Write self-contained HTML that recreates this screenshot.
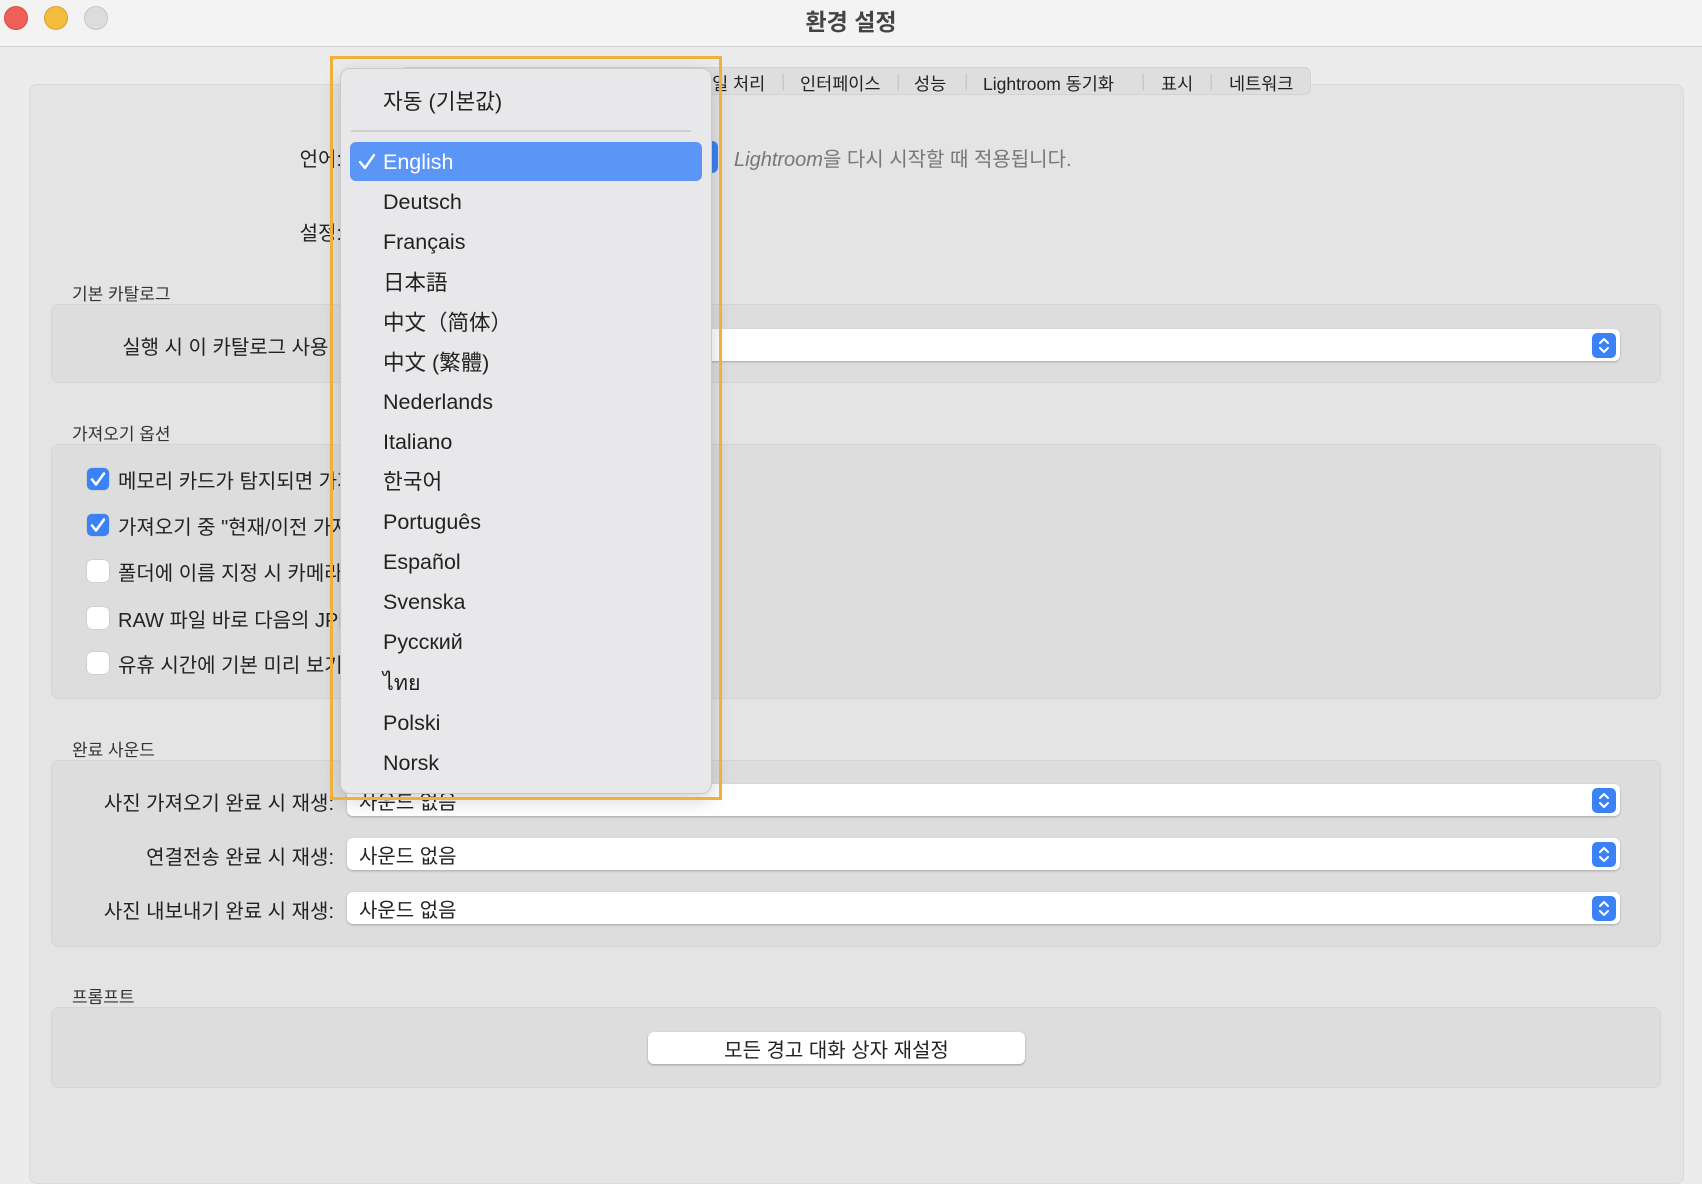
<!DOCTYPE html>
<html><head><meta charset="utf-8"><style>
*{margin:0;padding:0;box-sizing:border-box}
body{width:1702px;height:1128px;background:#ececec;font-family:"Liberation Sans","Noto Sans CJK KR",sans-serif;color:#222;position:relative;overflow:hidden}
.a{position:absolute}
.titlebar{left:0;top:0;width:1702px;height:47px;background:#f3f3f3;border-bottom:1px solid #d0d0d0}
.dot{width:24px;height:24px;border-radius:50%;top:6px}
.panel{left:29px;top:84px;width:1655px;height:1100px;background:#e4e4e4;border:1px solid #dadada;border-radius:8px}
.box{background:#dddddd;border:1px solid #d4d4d4;border-radius:8px;left:51px;width:1610px}
.sec{font-size:17px;color:#333;left:72px}
.lbl{font-size:20px;text-align:right;width:300px;color:#222}
.sel{left:347px;width:1273px;height:32px;background:#fff;border-radius:6px;box-shadow:0 1px 2px rgba(0,0,0,.25);font-size:20px;padding:2px 12px}
.step{position:absolute;right:4px;top:4px;width:24px;height:25px;background:#3b82f6;border-radius:5px}
.step svg{position:absolute;left:0;top:0}
.cb{left:87px;width:22px;height:22px;border-radius:5px;background:#fff;box-shadow:0 0 1px rgba(0,0,0,.4)}
.cb.on{background:#3b82f6}
.cbt{left:118px;font-size:20px}
.menu{left:340px;top:68px;width:372px;height:726px;background:#e8e8ea;border:1px solid #c9c9cc;border-radius:10px;box-shadow:0 6px 20px rgba(0,0,0,.18)}
.mi{left:42px;font-size:21.5px;color:#222;line-height:28px;height:28px}
</style></head><body>
<div class="a titlebar"></div>
<div class="a dot" style="left:4px;background:#ee5f57;border:1px solid #d54b43"></div>
<div class="a dot" style="left:44px;background:#f5bd3d;border:1px solid #d9a22c"></div>
<div class="a dot" style="left:84px;background:#dcdcdc;border:1px solid #c6c6c6"></div>
<div class="a" style="left:0;width:1702px;top:3px;text-align:center;font-size:23px;font-weight:bold;color:#444">환경 설정</div>

<div class="a panel"></div>
<div class="a" style="left:400px;top:67px;width:911px;height:28px;background:#dedede;border-radius:7px;border:1px solid #d2d2d2;font-size:17.5px;color:#222;white-space:nowrap;padding-top:3px">
<span style="position:absolute;left:295px">파일 처리</span>
<span style="position:absolute;left:380px;color:#c8c8c8">|</span>
<span style="position:absolute;left:399px">인터페이스</span>
<span style="position:absolute;left:495px;color:#c8c8c8">|</span>
<span style="position:absolute;left:513px">성능</span>
<span style="position:absolute;left:563px;color:#c8c8c8">|</span>
<span style="position:absolute;left:582px">Lightroom 동기화</span>
<span style="position:absolute;left:740px;color:#c8c8c8">|</span>
<span style="position:absolute;left:760px">표시</span>
<span style="position:absolute;left:808px;color:#c8c8c8">|</span>
<span style="position:absolute;left:828px">네트워크</span>
</div>

<div class="a lbl" style="left:42px;top:143px">언어:</div>
<div class="a" style="left:560px;top:141px;width:158px;height:32px;background:#3b82f6;border-radius:6px"></div>
<div class="a" style="left:734px;top:143px;font-size:20px;color:#777;font-style:italic">Lightroom<span style="font-style:normal">을 다시 시작할 때 적용됩니다.</span></div>
<div class="a lbl" style="left:42px;top:217px">설정:</div>

<div class="a sec" style="top:280px">기본 카탈로그</div>
<div class="a box" style="top:304px;height:79px"></div>
<div class="a lbl" style="left:34px;top:331px">실행 시 이 카탈로그 사용:</div>
<div class="a sel" style="top:329px"><div class="step"><svg width="24" height="25"><path d="M8 10l4-4 4 4M8 15l4 4 4-4" stroke="#fff" stroke-width="2" fill="none" stroke-linecap="round" stroke-linejoin="round"/></svg></div></div>

<div class="a sec" style="top:420px">가져오기 옵션</div>
<div class="a box" style="top:444px;height:255px"></div>
<div class="a cb on" style="top:468px"><svg width="22" height="22"><path d="M5 11.5l4 5 8-11" stroke="#fff" stroke-width="2.6" fill="none" stroke-linecap="round" stroke-linejoin="round"/></svg></div><div class="a cbt" style="top:465px">메모리 카드가 탐지되면 가져오기 대화 상자 표시</div>
<div class="a cb on" style="top:514px"><svg width="22" height="22"><path d="M5 11.5l4 5 8-11" stroke="#fff" stroke-width="2.6" fill="none" stroke-linecap="round" stroke-linejoin="round"/></svg></div><div class="a cbt" style="top:511px">가져오기 중 "현재/이전 가져오기" 컬렉션 선택</div>
<div class="a cb" style="top:560px"></div><div class="a cbt" style="top:557px">폴더에 이름 지정 시 카메라 생성 폴더 이름 무시</div>
<div class="a cb" style="top:607px"></div><div class="a cbt" style="top:604px">RAW 파일 바로 다음의 JPEG 파일을 별도 사진으로 처리</div>
<div class="a cb" style="top:652px"></div><div class="a cbt" style="top:649px">유휴 시간에 기본 미리 보기 생성</div>

<div class="a sec" style="top:736px">완료 사운드</div>
<div class="a box" style="top:760px;height:187px"></div>
<div class="a lbl" style="left:34px;top:787px">사진 가져오기 완료 시 재생:</div>
<div class="a sel" style="top:784px">사운드 없음<div class="step"><svg width="24" height="25"><path d="M8 10l4-4 4 4M8 15l4 4 4-4" stroke="#fff" stroke-width="2" fill="none" stroke-linecap="round" stroke-linejoin="round"/></svg></div></div>
<div class="a lbl" style="left:34px;top:841px">연결전송 완료 시 재생:</div>
<div class="a sel" style="top:838px">사운드 없음<div class="step"><svg width="24" height="25"><path d="M8 10l4-4 4 4M8 15l4 4 4-4" stroke="#fff" stroke-width="2" fill="none" stroke-linecap="round" stroke-linejoin="round"/></svg></div></div>
<div class="a lbl" style="left:34px;top:895px">사진 내보내기 완료 시 재생:</div>
<div class="a sel" style="top:892px">사운드 없음<div class="step"><svg width="24" height="25"><path d="M8 10l4-4 4 4M8 15l4 4 4-4" stroke="#fff" stroke-width="2" fill="none" stroke-linecap="round" stroke-linejoin="round"/></svg></div></div>

<div class="a sec" style="top:983px">프롬프트</div>
<div class="a box" style="top:1007px;height:81px"></div>
<div class="a" style="left:648px;top:1032px;width:377px;height:32px;background:#fff;border-radius:6px;box-shadow:0 1px 2px rgba(0,0,0,.3);text-align:center;font-size:20px;padding-top:2px">모든 경고 대화 상자 재설정</div>

<div class="a menu">
<div class="a mi" style="top:19px">자동 (기본값)</div>
<div class="a" style="left:10px;right:20px;top:61px;height:2px;background:#d0d0d2"></div>
<div class="a" style="left:9px;top:73px;width:352px;height:39px;background:#5b95f5;border-radius:6px"></div>
<svg class="a" style="left:16px;top:83px" width="20" height="20"><path d="M3 10l5 6 9-13" stroke="#fff" stroke-width="2.4" fill="none" stroke-linecap="round" stroke-linejoin="round"/></svg>
<div class="a mi" style="top:79px;color:#fff">English</div>
<div class="a mi" style="top:119px">Deutsch</div>
<div class="a mi" style="top:159px">Français</div>
<div class="a mi" style="top:200px">日本語</div>
<div class="a mi" style="top:240px">中文（简体）</div>
<div class="a mi" style="top:280px">中文 (繁體)</div>
<div class="a mi" style="top:319px">Nederlands</div>
<div class="a mi" style="top:359px">Italiano</div>
<div class="a mi" style="top:399px">한국어</div>
<div class="a mi" style="top:439px">Português</div>
<div class="a mi" style="top:479px">Español</div>
<div class="a mi" style="top:519px">Svenska</div>
<div class="a mi" style="top:559px">Русский</div>
<div class="a mi" style="top:600px">ไทย</div>
<div class="a mi" style="top:640px">Polski</div>
<div class="a mi" style="top:680px">Norsk</div>
</div>
<div class="a" style="left:330px;top:56px;width:392px;height:744px;border:3px solid #f0b03c"></div>
</body></html>
